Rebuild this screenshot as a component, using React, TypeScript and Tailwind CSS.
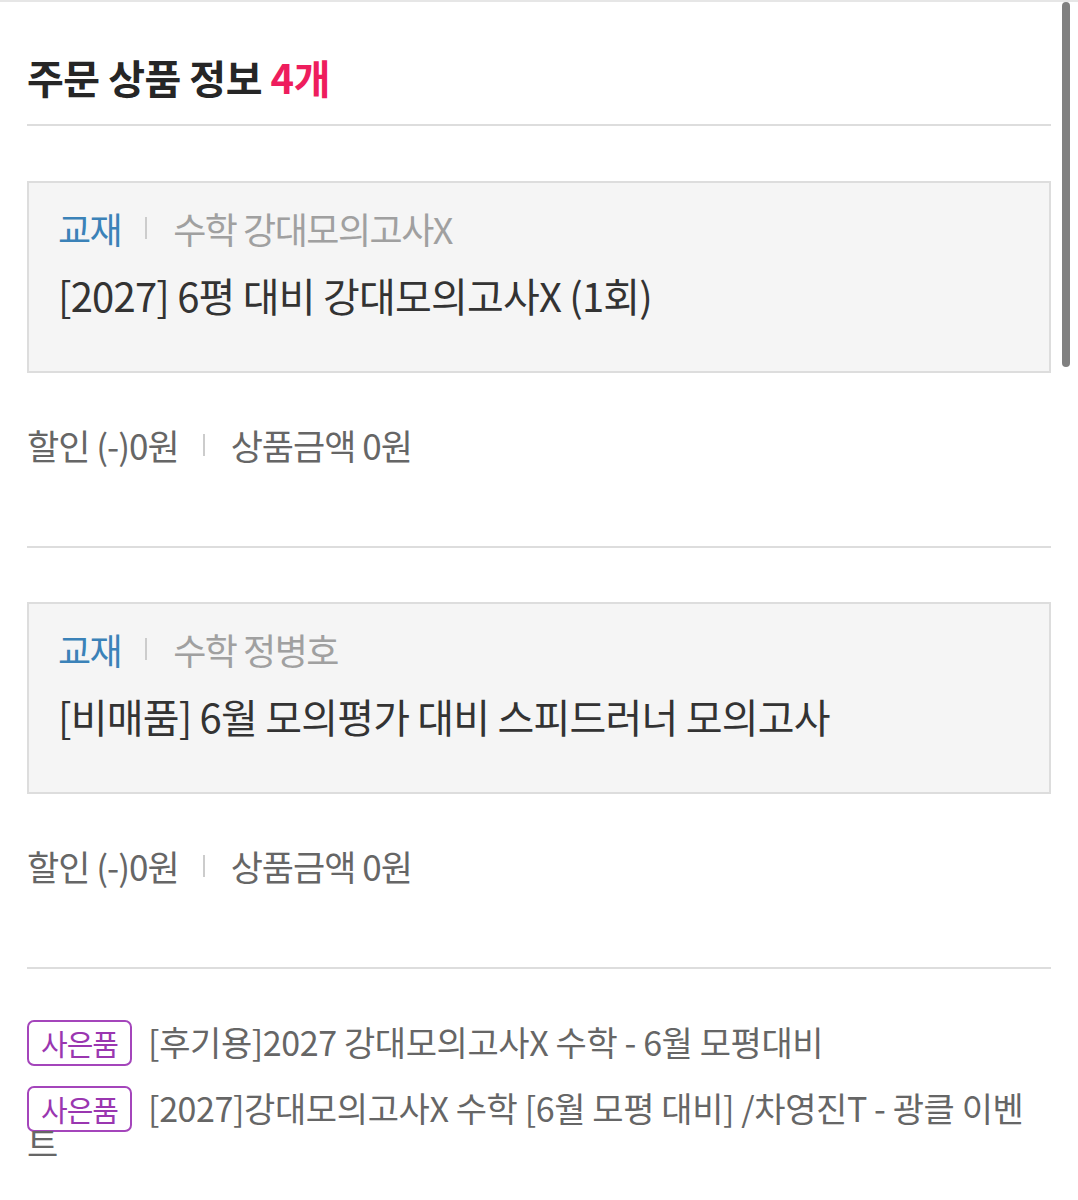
import React from "react";

const font = { fontFamily: '"Noto Sans CJK KR", "Noto Sans", sans-serif' };

function ProductBox({ sub, title }: { sub: string; title: string }) {
  return (
    <div className="border-2 border-[#dddddd] bg-[#f5f5f5] pl-[29px] pt-[25px] pb-[54px]">
      <div className="flex items-center h-[40px] text-[36px] tracking-[-1.5px]">
        <span className="text-[#3b82b8]">교재</span>
        <span className="ml-[24px] mr-[26px] w-[2px] h-[22px] bg-[#cccccc]" />
        <span className="text-[#a0a0a0]">{sub}</span>
      </div>
      <div className="mt-[25px] h-[44px] leading-[44px] text-[40px] tracking-[-0.8px] text-[#333333]">
        {title}
      </div>
    </div>
  );
}

function PriceRow() {
  return (
    <div className="mt-[52px] mb-[81px] flex items-center h-[40px] text-[35px] tracking-[-1px] text-[#666666]">
      <span>할인 (-)0원</span>
      <span className="ml-[24px] mr-[26px] w-[2px] h-[22px] bg-[#cccccc]" />
      <span>상품금액 0원</span>
    </div>
  );
}

function Gift({ text, className }: { text: string; className?: string }) {
  return (
    <div className={"leading-[34px] text-[34px] tracking-[-0.4px] text-[#666666] pr-[22px] " + (className ?? "")}>
      <span className="border-2 border-[#a445bb] rounded-[7px] px-[12px] py-0 text-[29px] tracking-[-1px] text-[#9a36b0] mr-[16px]">
        사은품
      </span>
      {text}
    </div>
  );
}

export default function App() {
  return (
    <div className="relative bg-white min-h-[1200px] border-t-2 border-[#e6e6e6] overflow-hidden" style={font}>
      <div className="px-[27px] w-[1078px]">
        <div className="w-[1024px]">
          <h1 className="pt-[50px] h-[100px] leading-[50px] text-[40px] font-bold tracking-[-0.5px] text-[#262626]">
            주문 상품 정보 <span className="text-[#ee1d5d]">4개</span>
          </h1>
          <div className="mt-[22px] h-[2px] bg-[#dddddd]" />

          <div className="mt-[55px]">
            <ProductBox sub="수학 강대모의고사X" title="[2027] 6평 대비 강대모의고사X (1회)" />
          </div>
          <PriceRow />
          <div className="h-[2px] bg-[#dddddd]" />

          <div className="mt-[54px]">
            <ProductBox sub="수학 정병호" title="[비매품] 6월 모의평가 대비 스피드러너 모의고사" />
          </div>
          <PriceRow />
          <div className="h-[2px] bg-[#dddddd]" />

          <Gift className="mt-[56px]" text="[후기용]2027 강대모의고사X 수학 - 6월 모평대비" />
          <Gift className="mt-[31px]" text="[2027]강대모의고사X 수학 [6월 모평 대비] /차영진T - 광클 이벤트" />
        </div>
      </div>
      <div className="absolute left-[1062px] top-0 w-[8px] h-[365px] rounded-full bg-[#808080]" />
    </div>
  );
}
